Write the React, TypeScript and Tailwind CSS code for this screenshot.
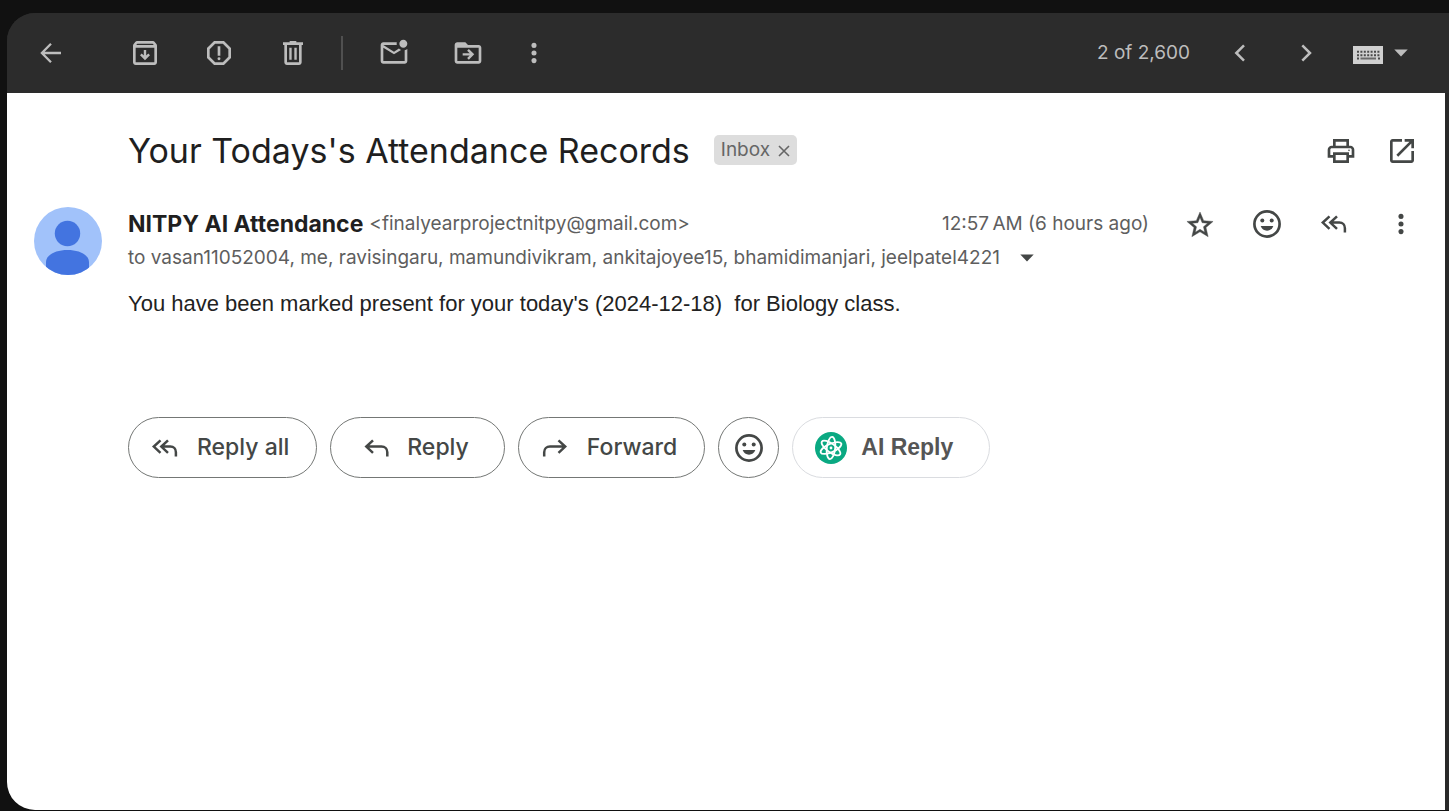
import React from "react";
import type { ReactNode } from "react";

function Material({ children }: { children: ReactNode }) {
  return (
    <svg viewBox="0 0 24 24" className="size-8" fill="currentColor" aria-hidden="true">
      {children}
    </svg>
  );
}

function Line({ children }: { children: ReactNode }) {
  return (
    <svg
      viewBox="0 0 32 32"
      className="size-8 shrink-0"
      fill="none"
      stroke="currentColor"
      strokeWidth="2.5"
      aria-hidden="true"
    >
      {children}
    </svg>
  );
}

const BackIcon = () => (
  <Line>
    <path d="M26 16H8M16 6.8 6.9 16l9.1 9.2" strokeWidth="2.3" />
  </Line>
);

const ArchiveIcon = () => (
  <Material>
    <path d="M20.54 5.23l-1.39-1.68C18.88 3.21 18.47 3 18 3H6c-.47 0-.88.21-1.16.55L3.46 5.23C3.17 5.57 3 6.02 3 6.5V19c0 1.1.9 2 2 2h14c1.1 0 2-.9 2-2V6.5c0-.48-.17-.93-.46-1.27zM6.24 5h11.52l.83 1H5.42l.82-1zM5 19V8h14v11H5z" />
    <path d="M12 9.7v6.2M8.9 13l3.1 3.1 3.1-3.1" fill="none" stroke="currentColor" strokeWidth="1.8" />
  </Material>
);

const ReportIcon = () => (
  <Material>
    <path d="M15.73 3H8.27L3 8.27v7.46L8.27 21h7.46L21 15.73V8.27L15.73 3zM19 14.9L14.9 19H9.1L5 14.9V9.1L9.1 5h5.8L19 9.1v5.8z" />
    <path d="M11 7h2v7h-2z" />
    <circle cx="12" cy="16.3" r="1.1" />
  </Material>
);

const TrashIcon = () => (
  <Material>
    <path d="M14.5 4V3h-5v1h-5v2h1v13c0 1.1.9 2 2 2h9c1.1 0 2-.9 2-2V6h1V4h-5zm2 15h-9V6h9v13z" />
    <path d="M9.2 8H11v9H9.2zM13 8h1.8v9H13z" />
  </Material>
);

const UnreadIcon = () => (
  <Material>
    <path d="M22 8.98V18c0 1.1-.9 2-2 2H4c-1.1 0-2-.9-2-2V6c0-1.1.9-2 2-2h10.1c-.06.32-.1.66-.1 1 0 .34.04.68.1 1H4l8 5 3.67-2.29c.47.43 1.02.76 1.63.98L12 13 4 8v10h16V9.9c.74-.15 1.42-.48 2-.92zM16 5c0 1.66 1.34 3 3 3s3-1.34 3-3-1.34-3-3-3-3 1.34-3 3z" />
  </Material>
);

const MoveIcon = () => (
  <Material>
    <path d="M20 6h-8l-2-2H4c-1.1 0-2 .9-2 2v12c0 1.1.9 2 2 2h16c1.1 0 2-.9 2-2V8c0-1.1-.9-2-2-2zm0 12H4V8h16v10z" />
    <path d="M8 13h6.5M12 9.6l3.4 3.4-3.4 3.4" fill="none" stroke="currentColor" strokeWidth="1.8" />
  </Material>
);

const MoreIcon = () => (
  <Material>
    <circle cx="12" cy="6.3" r="1.9" />
    <circle cx="12" cy="12" r="1.9" />
    <circle cx="12" cy="17.7" r="1.9" />
  </Material>
);

const PrevIcon = () => (
  <Line>
    <path d="m20 8.3-7.7 7.7 7.7 7.7" />
  </Line>
);

const NextIcon = () => (
  <Line>
    <path d="m12.3 8.3 7.7 7.7-7.7 7.7" />
  </Line>
);

const KeyboardIcon = () => (
  <svg viewBox="0 0 30 18" className="h-[18px] w-[30px]" aria-hidden="true">
    <path d="M0 0h30v18H0z" fill="#d0d0d0" />
    <path d="M4 5.7h23M4 9.2h23" stroke="#4a4a4a" strokeWidth="2" strokeDasharray="2 1.4" />
    <path d="M4 12.6h2M25 12.6h2" stroke="#4a4a4a" strokeWidth="2" />
    <path d="M7.5 12.6h15.5" stroke="#6a6a6a" strokeWidth="2" />
  </svg>
);

const CaretIcon = () => (
  <svg viewBox="0 0 14 8" className="h-2 w-[14px]" fill="currentColor" aria-hidden="true">
    <path d="M.3.5h13.4L7 7.5z" />
  </svg>
);

const PrintIcon = () => (
  <Material>
    <path d="M19 8h-1V3H6v5H5c-1.66 0-3 1.34-3 3v6h4v4h12v-4h4v-6c0-1.66-1.34-3-3-3zM8 5h8v3H8V5zm8 14H8v-4h8v4zm2-4v-2H6v2H4v-4c0-.55.45-1 1-1h14c.55 0 1 .45 1 1v4h-2z" />
    <circle cx="18" cy="11.5" r=".6" />
  </Material>
);

const PopOutIcon = () => (
  <Material>
    <path d="M19 19H5V5h7V3H5c-1.11 0-2 .9-2 2v14c0 1.1.89 2 2 2h14c1.1 0 2-.9 2-2v-7h-2v7zM14 3v2h3.59l-9.83 9.83 1.41 1.41L19 6.41V10h2V3h-7z" />
  </Material>
);

const StarIcon = () => (
  <Material>
    <path
      d="M21.8 10.1l-7-.62L12 3 9.2 9.5l-7 .6 5.3 4.6-1.6 6.8 6.1-3.6 6.1 3.6-1.6-6.8zM12 16l-3.5 2.1.9-4-3.1-2.7 4.1-.36L12 7.2l1.6 3.84 4.1.36-3.1 2.7.9 4z"
      stroke="currentColor"
      strokeWidth=".3"
    />
  </Material>
);

const SmileIcon = () => (
  <Line>
    <circle cx="16" cy="16" r="12.6" strokeWidth="2.7" />
    <g fill="currentColor" stroke="none">
      <circle cx="11.3" cy="12.6" r="2" />
      <circle cx="20.7" cy="12.6" r="2" />
      <path d="M9.7 18h12.6c-1 2.9-3.4 4.7-6.3 4.7S10.7 20.9 9.7 18z" />
    </g>
  </Line>
);

const ReplyAllIcon = () => (
  <Line>
    <path d="M11.5 8.3 4.8 14.6l6.7 6.3M19 8.3l-6.7 6.3 6.7 6.3M13 14.6h8.3c3.4 0 5.6 2.3 5.6 5.7v4.3" />
  </Line>
);

const ReplyIcon = () => (
  <Line>
    <path d="M12 8.3 5.3 14.6l6.7 6.3M6 14.6h14.5c3.4 0 5.8 2.3 5.8 5.7v4.3" />
  </Line>
);

const ForwardIcon = () => (
  <Line>
    <path d="m19.5 8.3 6.7 6.3-6.7 6.3M25.5 14.6H11c-3.4 0-5.8 2.3-5.8 5.7v4.3" />
  </Line>
);

const AiIcon = () => (
  <svg viewBox="0 0 32 32" className="size-8 shrink-0" fill="none" aria-hidden="true">
    <circle cx="16" cy="16" r="16" fill="#0aa982" />
    <g stroke="#ffffff" strokeWidth="1.8">
      <ellipse cx="16" cy="16" rx="4.2" ry="11.2" transform="rotate(6 16 16)" />
      <ellipse cx="16" cy="16" rx="4.2" ry="11.2" transform="rotate(66 16 16)" />
      <ellipse cx="16" cy="16" rx="4.2" ry="11.2" transform="rotate(126 16 16)" />
    </g>
    <circle cx="16" cy="16" r="1.4" fill="#ffffff" />
  </svg>
);

const Avatar = () => (
  <svg viewBox="0 0 68 68" className="size-[68px] shrink-0" role="img" aria-label="Sender">
    <defs>
      <clipPath id="avatar">
        <circle cx="34" cy="34" r="34" />
      </clipPath>
    </defs>
    <g clipPath="url(#avatar)">
      <path d="M0 0h68v68H0z" fill="#a1c2fa" />
      <circle cx="33.5" cy="26.5" r="12.7" fill="#4374e0" />
      <path d="M12 68V55c0-7 9.5-12 21.5-12S55 48 55 55v13z" fill="#4374e0" />
    </g>
  </svg>
);

function IconButton({ label, children }: { label: string; children: ReactNode }) {
  return (
    <button type="button" aria-label={label} className="size-8 shrink-0">
      {children}
    </button>
  );
}

function Pill({ icon, children }: { icon: ReactNode; children: ReactNode }) {
  return (
    <button
      type="button"
      className="flex h-[61px] items-center gap-4 rounded-full border border-[#747775] pr-[27px] pl-5 text-[23px] font-medium whitespace-nowrap"
    >
      {icon}
      {children}
    </button>
  );
}

function Toolbar() {
  return (
    <header className="flex h-20 items-center bg-[#2c2c2c] pr-[41px] pl-7 text-[#bdbdbd]">
      <IconButton label="Back to Inbox"><BackIcon /></IconButton>
      <div className="ml-[62px] flex gap-[42px]">
        <IconButton label="Archive"><ArchiveIcon /></IconButton>
        <IconButton label="Report spam"><ReportIcon /></IconButton>
        <IconButton label="Delete"><TrashIcon /></IconButton>
      </div>
      <div className="ml-8 h-[34px] w-0.5 bg-[#505050]" />
      <div className="ml-[35px] flex gap-[42px]">
        <IconButton label="Mark as unread"><UnreadIcon /></IconButton>
        <IconButton label="Move to"><MoveIcon /></IconButton>
      </div>
      <div className="ml-[34px] flex">
        <IconButton label="More"><MoreIcon /></IconButton>
      </div>
      <div className="ml-auto flex items-center gap-[34px]">
        <span className="text-[19px] whitespace-nowrap">2 of 2,600</span>
        <IconButton label="Newer"><PrevIcon /></IconButton>
        <IconButton label="Older"><NextIcon /></IconButton>
      </div>
      <button type="button" aria-label="Select input tool" className="ml-[31px] flex items-center gap-[11px] pt-1">
        <KeyboardIcon />
        <span className="pb-1"><CaretIcon /></span>
      </button>
    </header>
  );
}

export default function App() {
  return (
    <div className="flex min-h-screen flex-col bg-[#111111] pt-[13px] pb-px pl-[7px] font-['Inter',sans-serif]">
      <div className="flex grow flex-col overflow-hidden rounded-l-[28px] bg-[#292929]">
        <Toolbar />
        <main className="mr-1 grow bg-white pt-[27px] pr-[27px] pl-[27px] text-[#444746]">
          <div className="flex h-[60px] items-center pl-[94px]">
            <h1 className="text-[34px] whitespace-nowrap text-[#1f1f1f]">Your Todays's Attendance Records</h1>
            <span className="ml-6 flex h-[30px] items-center gap-2 rounded-[5px] bg-[#dddddd] px-[7px] text-[19px] text-[#666666]">
              Inbox
              <button type="button" aria-label="Remove label Inbox">
                <svg viewBox="0 0 12 12" className="mt-0.5 size-3" stroke="currentColor" strokeWidth="1.6" aria-hidden="true">
                  <path d="m1 1 10 10M11 1 1 11" />
                </svg>
              </button>
            </span>
            <div className="ml-auto flex gap-[29px] pt-0.5">
              <IconButton label="Print all"><PrintIcon /></IconButton>
              <IconButton label="In new window"><PopOutIcon /></IconButton>
            </div>
          </div>

          <article className="mt-[27px] flex gap-[26px]">
            <Avatar />
            <div className="min-w-0 grow">
              <div className="flex h-[34px] items-center whitespace-nowrap">
                <h2 className="text-[23px] font-bold text-[#1f1f1f]">NITPY AI Attendance</h2>
                <span className="ml-1.5 text-[19px] text-[#5e5e5e]">&lt;finalyearprojectnitpy@gmail.com&gt;</span>
                <div className="ml-auto flex items-center gap-[35px] pr-px">
                  <time className="text-[19px] text-[#5e5e5e]">12:57&#8239;AM (6 hours ago)</time>
                  <div className="flex gap-[35px]">
                    <IconButton label="Star"><StarIcon /></IconButton>
                    <IconButton label="Add reaction"><SmileIcon /></IconButton>
                    <IconButton label="Reply all"><ReplyAllIcon /></IconButton>
                    <IconButton label="More"><MoreIcon /></IconButton>
                  </div>
                </div>
              </div>
              <div className="flex h-[34px] items-center gap-5 text-[19px] whitespace-nowrap text-[#5e5e5e]">
                to vasan11052004, me, ravisingaru, mamundivikram, ankitajoyee15, bhamidimanjari, jeelpatel4221
                <button type="button" aria-label="Show details" className="text-[#444746]"><CaretIcon /></button>
              </div>
              <p className="mt-3.5 font-['Liberation_Sans',Arial,sans-serif] text-[22px] leading-[30px] text-[#222222]">
                You have been marked present for your today's (2024-12-18)&nbsp; for Biology class.
              </p>
              <div className="mt-[98px] flex gap-[13px]">
                <Pill icon={<ReplyAllIcon />}>Reply all</Pill>
                <button
                  type="button"
                  className="flex h-[61px] items-center gap-3.5 rounded-full border border-[#747775] pr-[35px] pl-[30px] text-[23px] font-medium whitespace-nowrap"
                >
                  <ReplyIcon />
                  Reply
                </button>
                <Pill icon={<ForwardIcon />}>Forward</Pill>
                <button
                  type="button"
                  aria-label="Add reaction"
                  className="flex size-[61px] items-center justify-center rounded-full border border-[#747775]"
                >
                  <SmileIcon />
                </button>
                <button
                  type="button"
                  className="flex h-[61px] items-center gap-3.5 rounded-full border border-[#dadce0] pr-9 pl-[22px] font-['Liberation_Sans',Arial,sans-serif] text-[23px] font-bold whitespace-nowrap text-[#555555]"
                >
                  <AiIcon />
                  AI Reply
                </button>
              </div>
            </div>
          </article>
        </main>
      </div>
    </div>
  );
}
